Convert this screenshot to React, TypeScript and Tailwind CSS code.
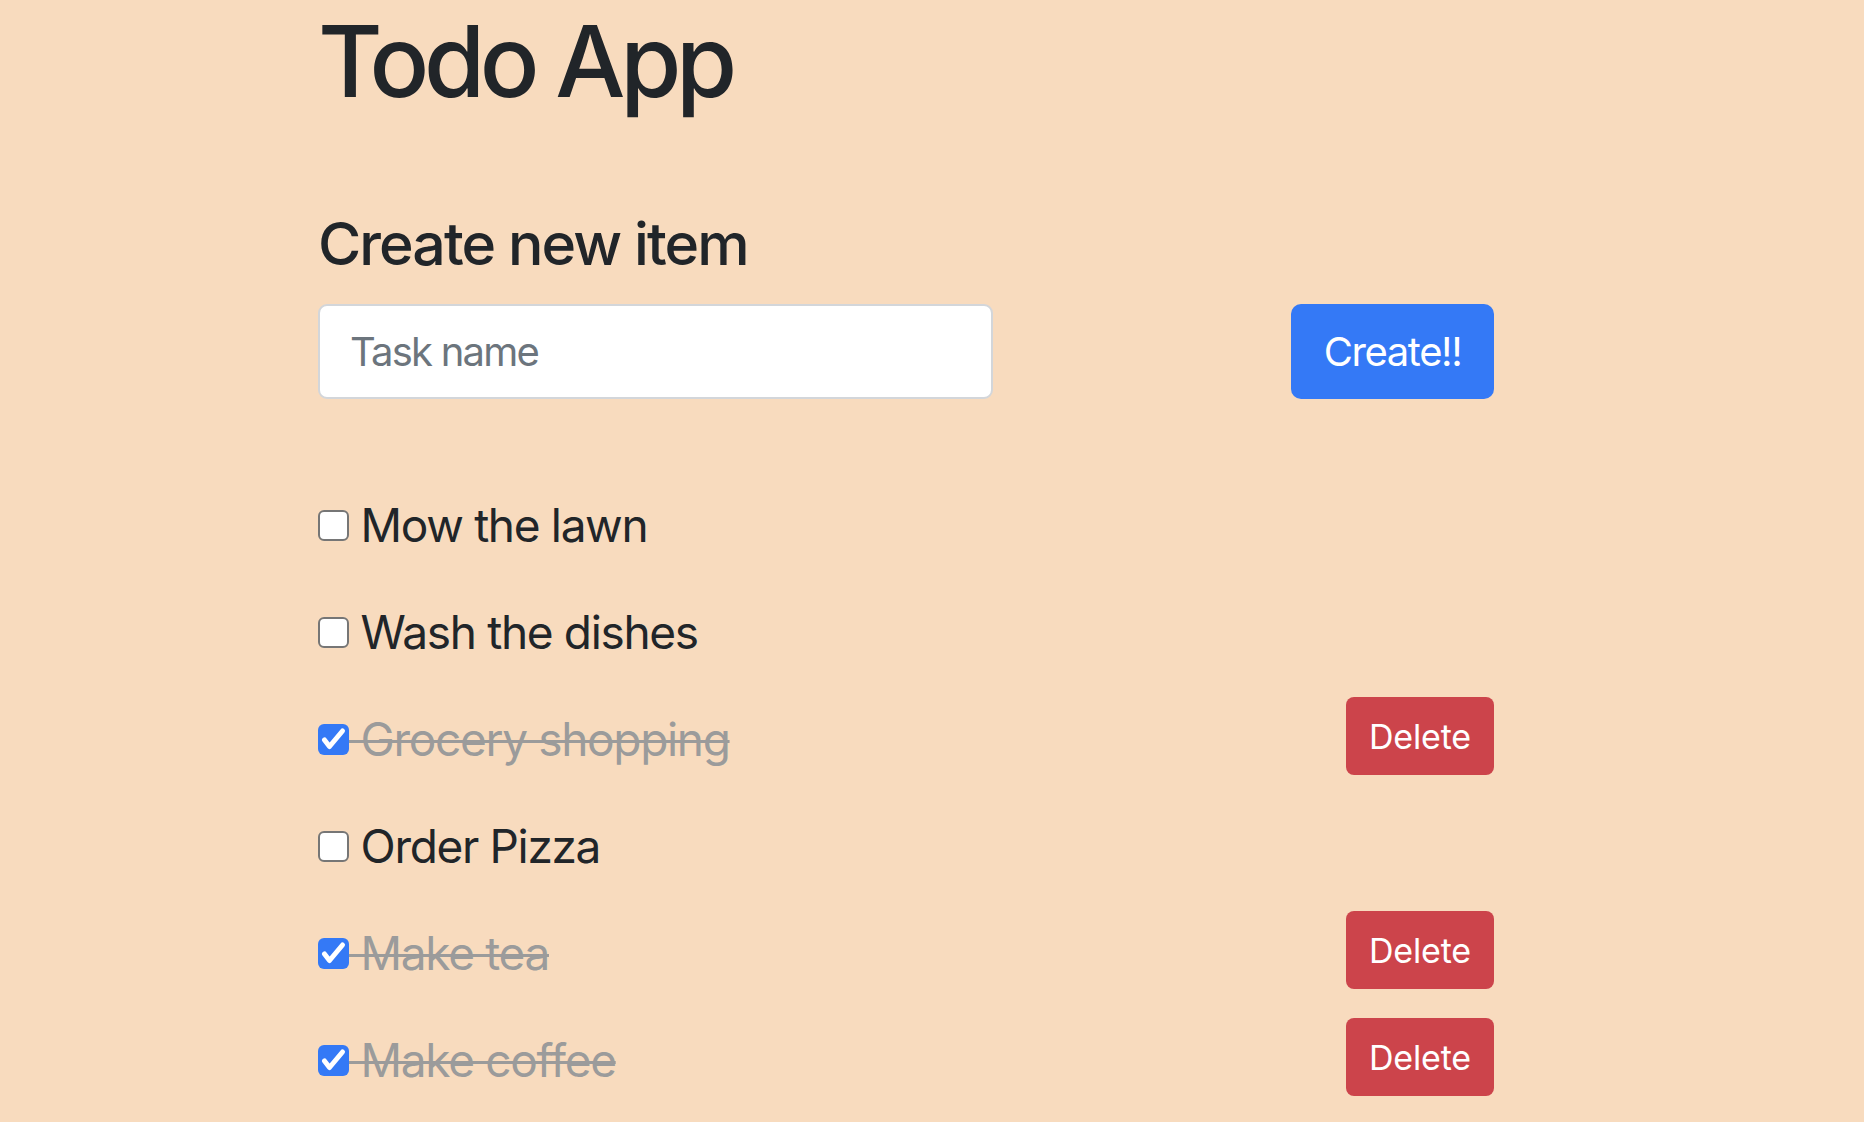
import { useState } from 'react';

interface Todo {
  name: string;
  done: boolean;
}

const initialTodos: Todo[] = [
  { name: 'Mow the lawn', done: false },
  { name: 'Wash the dishes', done: false },
  { name: 'Grocery shopping', done: true },
  { name: 'Order Pizza', done: false },
  { name: 'Make tea', done: true },
  { name: 'Make coffee', done: true },
];

const CheckBox = ({ checked }: { checked: boolean }) =>
  checked ? (
    <span className="flex h-[31px] w-[31px] shrink-0 items-center justify-center rounded-[6px] bg-[#3479f6]">
      <svg width="31" height="31" viewBox="0 0 31 31" fill="none">
        <path d="M6.5 16 L11.5 22.5 L24.5 7" stroke="white" strokeWidth="5" strokeLinecap="round" strokeLinejoin="round" />
      </svg>
    </span>
  ) : (
    <span className="block h-[31px] w-[31px] shrink-0 rounded-[6px] border-2 border-[#767676] bg-white" />
  );

export default function App() {
  const [todos, setTodos] = useState<Todo[]>(initialTodos);
  const [task, setTask] = useState('');

  const toggle = (i: number) =>
    setTodos(prev => prev.map((t, j) => (j === i ? { ...t, done: !t.done } : t)));

  const remove = (i: number) => setTodos(prev => prev.filter((_, j) => j !== i));

  const create = () => {
    if (!task.trim()) return;
    setTodos(prev => [...prev, { name: task, done: false }]);
    setTask('');
  };

  return (
    <div className="min-h-screen bg-[#f8dbbe] pl-[318px] pt-[1px] font-[Inter,sans-serif] text-[#212529]">
      <div className="w-[1176px]">
        <h1 className="text-[99px] font-medium leading-[120px] tracking-[-0.054em]">Todo App</h1>

        <h2 className="mt-[87px] text-[59px] font-medium leading-[72px] tracking-[-0.033em]">Create new item</h2>

        {/* New item form */}
        <div className="mt-[24px] flex items-center justify-between">
          <input
            type="text"
            value={task}
            onChange={e => setTask(e.target.value)}
            onKeyDown={e => e.key === 'Enter' && create()}
            placeholder="Task name"
            className="h-[95px] w-[675px] rounded-[9px] border-2 border-[#d3d6da] bg-white px-[30px] text-[40px] tracking-[-0.045em] text-[#495057] placeholder:text-[#6c757d] focus:outline-none"
          />
          <button
            onClick={create}
            className="h-[95px] w-[203px] rounded-[10px] bg-[#3479f6] text-[40px] tracking-[-0.035em] text-white"
          >
            Create!!
          </button>
        </div>

        {/* Todo list */}
        <ul className="mt-[84px] flex flex-col gap-[29px]">
          {todos.map((todo, i) => (
            <li key={todo.name + i} className="flex h-[78px] items-center justify-between">
              <label
                onClick={() => toggle(i)}
                className={`flex cursor-pointer items-center pt-[6px] text-[46px] leading-none tracking-[-0.029em] ${
                  todo.done ? 'text-[#9b9b9b] line-through decoration-[3px]' : ''
                }`}
              >
                <CheckBox checked={todo.done} />
                <span className="whitespace-pre">{' ' + todo.name}</span>
              </label>
              {todo.done && (
                <button
                  onClick={() => remove(i)}
                  className="h-[78px] w-[148px] rounded-[8px] bg-[#cc444b] text-[34px] tracking-[-0.005em] text-white"
                >
                  Delete
                </button>
              )}
            </li>
          ))}
        </ul>
      </div>
    </div>
  );
}
